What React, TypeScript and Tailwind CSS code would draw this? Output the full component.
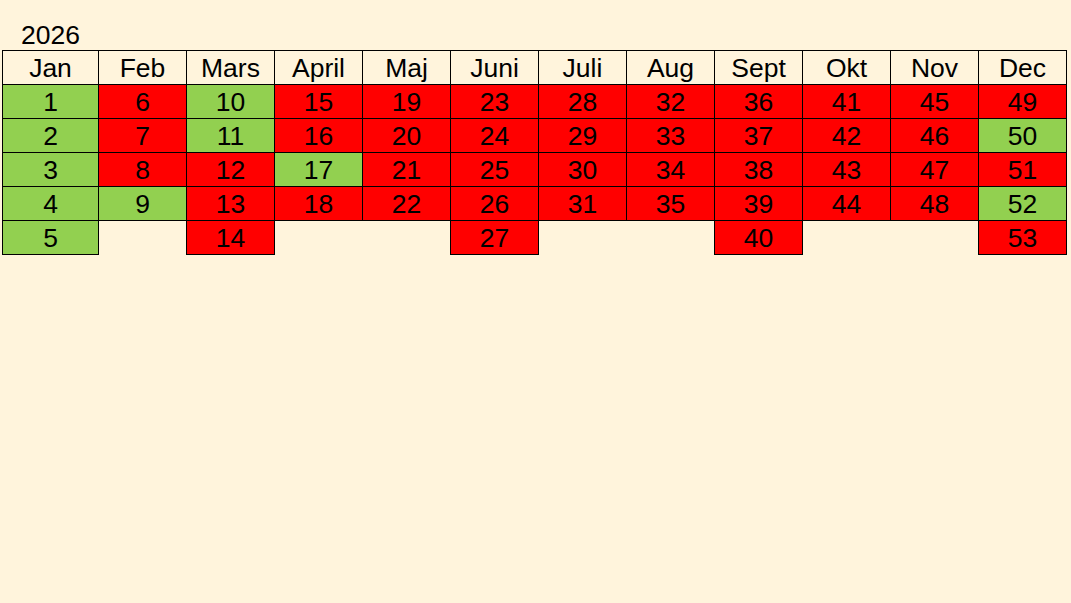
type Week = { n: number; ok: boolean }

const G = true
const R = false

const months: { name: string; weeks: Week[] }[] = [
  { name: 'Jan', weeks: [1, 2, 3, 4, 5].map((n) => ({ n, ok: G })) },
  { name: 'Feb', weeks: [{ n: 6, ok: R }, { n: 7, ok: R }, { n: 8, ok: R }, { n: 9, ok: G }] },
  { name: 'Mars', weeks: [{ n: 10, ok: G }, { n: 11, ok: G }, { n: 12, ok: R }, { n: 13, ok: R }, { n: 14, ok: R }] },
  { name: 'April', weeks: [{ n: 15, ok: R }, { n: 16, ok: R }, { n: 17, ok: G }, { n: 18, ok: R }] },
  { name: 'Maj', weeks: [19, 20, 21, 22].map((n) => ({ n, ok: R })) },
  { name: 'Juni', weeks: [23, 24, 25, 26, 27].map((n) => ({ n, ok: R })) },
  { name: 'Juli', weeks: [28, 29, 30, 31].map((n) => ({ n, ok: R })) },
  { name: 'Aug', weeks: [32, 33, 34, 35].map((n) => ({ n, ok: R })) },
  { name: 'Sept', weeks: [36, 37, 38, 39, 40].map((n) => ({ n, ok: R })) },
  { name: 'Okt', weeks: [41, 42, 43, 44].map((n) => ({ n, ok: R })) },
  { name: 'Nov', weeks: [45, 46, 47, 48].map((n) => ({ n, ok: R })) },
  { name: 'Dec', weeks: [{ n: 49, ok: R }, { n: 50, ok: G }, { n: 51, ok: R }, { n: 52, ok: G }, { n: 53, ok: R }] },
]

export default function App() {
  return (
    <div className="w-[1071px] h-[603px] bg-[#fff4dc] text-black text-[26.5px] font-['Liberation_Sans',Arial,sans-serif]">
      <div className="h-[50px] pt-[22px] pl-[21px] leading-[26px]">2026</div>
      <div className="ml-[2px] grid grid-flow-col grid-cols-[96px_repeat(11,88px)] grid-rows-[repeat(6,34px)] w-max">
        {months.map((m) => (
          <>
            <div key={m.name} className="-mr-px -mb-px pt-px border border-black flex items-center justify-center leading-none">
              {m.name}
            </div>
            {[0, 1, 2, 3, 4].map((i) => {
              const w = m.weeks[i]
              if (!w) return <div key={m.name + i} />
              return (
                <div
                  key={m.name + i}
                  className={
                    '-mr-px -mb-px pt-px border border-black flex items-center justify-center leading-none ' +
                    (w.ok ? 'bg-[#92d050]' : 'bg-[#ff0000]')
                  }
                >
                  {w.n}
                </div>
              )
            })}
          </>
        ))}
      </div>
    </div>
  )
}
